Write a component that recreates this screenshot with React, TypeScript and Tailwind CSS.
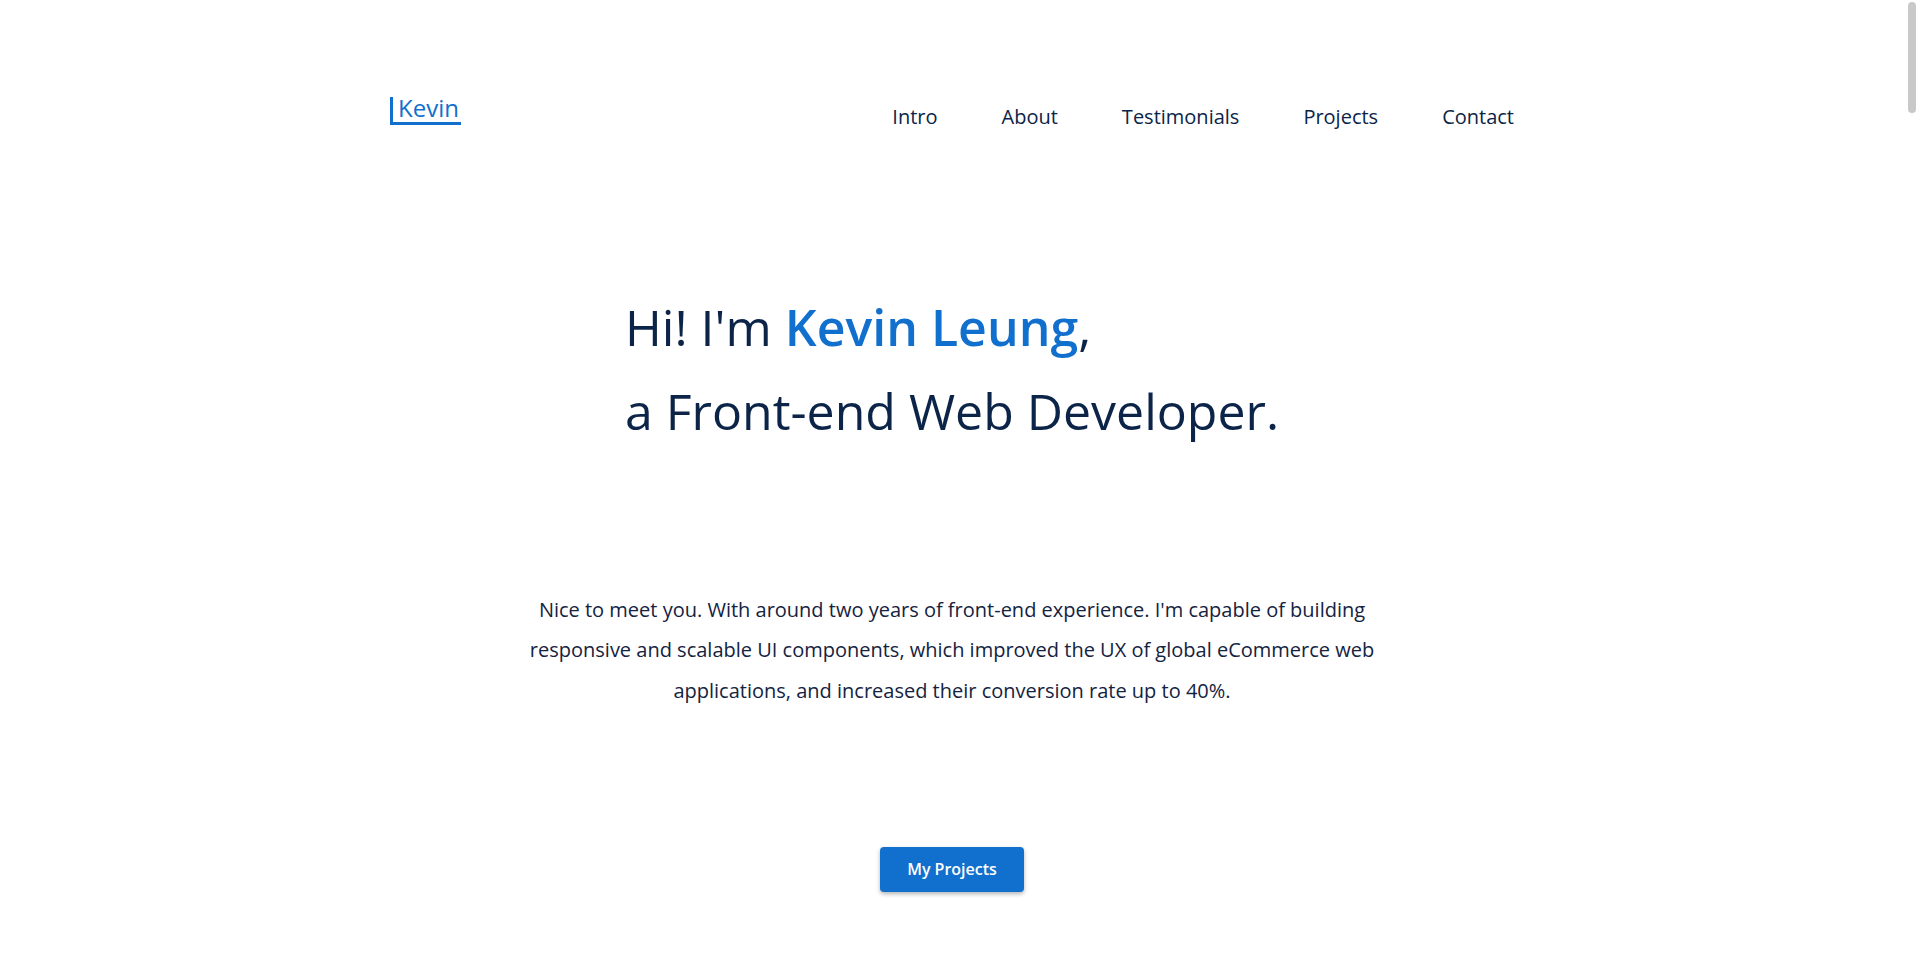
import React from "react";

const navItems = ["Intro", "About", "Testimonials", "Projects", "Contact"];

export default function App() {
  return (
    <div className="flex min-h-screen bg-white font-['Open_Sans',sans-serif] text-[#0b2447]">
      <main className="flex-1">
        <header className="mx-auto flex w-[1124px] items-start justify-between pt-[97px]">
          <a
            href="#intro"
            className="border-b-[3px] border-l-[3px] border-[#1170cd] pb-1 pl-[5px] pr-[2px] text-[24px] leading-[21px] text-[#1170cd]"
          >
            Kevin
          </a>
          <nav className="mt-[6px] flex gap-16">
            {navItems.map((item) => (
              <a
                key={item}
                href={`#${item.toLowerCase()}`}
                className="text-[20px] leading-[27px] text-[#0b2447]"
              >
                {item}
              </a>
            ))}
          </nav>
        </header>

        <section id="intro" className="flex flex-col items-center pt-[155px]">
          <h1 className="w-fit text-left text-[50px] leading-[84.4px] font-normal text-[#0b2447]">
            Hi! I'm <span className="font-semibold text-[#1170cd]">Kevin Leung</span>,
            <br />
            a Front-end Web Developer.
          </h1>
          <p className="mt-[136px] w-[900px] text-center text-[20px] leading-[40.6px] text-[#14233f]">
            Nice to meet you. With around two years of front-end experience. I'm capable of building
            responsive and scalable UI components, which improved the UX of global eCommerce web
            applications, and increased their conversion rate up to 40%.
          </p>
          <button className="mt-[135px] h-[45px] w-[144px] rounded-[4px] bg-[#1170cd] text-[16px] font-semibold text-white shadow-[0_2px_4px_rgba(0,0,0,0.3)]">
            My Projects
          </button>
        </section>
      </main>
      <aside className="w-4 shrink-0 px-1 pt-[2px]">
        <div className="h-[111px] w-2 rounded-full bg-[#c9c9c9]" />
      </aside>
    </div>
  );
}
